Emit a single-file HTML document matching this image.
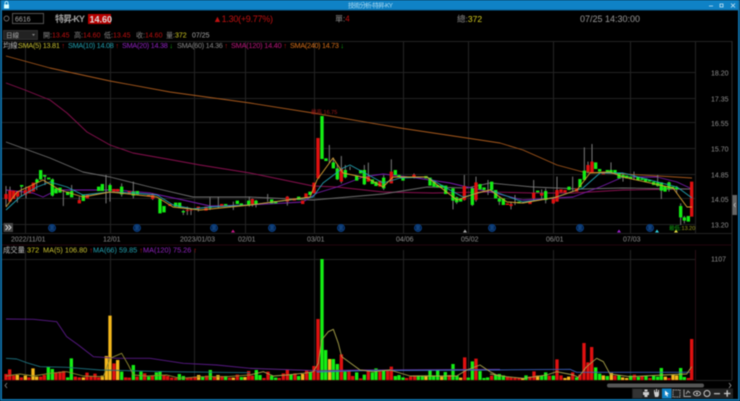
<!DOCTYPE html>
<html><head><meta charset="utf-8"><style>
html,body{margin:0;padding:0;background:#000;width:740px;height:401px;overflow:hidden}
svg{display:block;filter:blur(.42px)}
text{font-family:"Liberation Sans","Noto Sans CJK TC",sans-serif}
</style></head><body>
<svg width="740" height="401" viewBox="0 0 740 401" xmlns="http://www.w3.org/2000/svg">
<rect width="740" height="401" fill="#000"/>
<!-- window frame -->
<rect width="740" height="10" fill="#0f82c6"/><rect y="9.5" width="740" height="1" fill="#0a5f94"/>
<rect width="2" height="401" fill="#0e6fa8"/><rect x="738" width="2" height="401" fill="#0e6fa8"/><rect y="399" width="740" height="2" fill="#0e6fa8"/>
<path d="M4 4.5h5v4h-5z" fill="#dff"/><path d="M5 4.5v-1.5a1.5 1.5 0 0 1 3 0v1.5" fill="none" stroke="#dff" stroke-width=".8"/>
<text x="348" y="7.6" font-size="6.5" fill="#a8d8f0" textLength="45">技術分析-特昇-KY</text>
<path d="M709 6h4M720 4h3v3h-3zM731 3.5l4 4M735 3.5l-4 4" fill="none" stroke="#cfe8f5" stroke-width=".8"/>
<!-- header -->
<circle cx="6.5" cy="18.5" r="2.5" fill="none" stroke="#888" stroke-width=".7"/>
<rect x="12.5" y="13.5" width="31" height="10" fill="#000" stroke="#666" stroke-width=".8"/>
<text x="15" y="21.5" font-size="7" fill="#aaa">6616</text>
<text x="55" y="22" font-size="9" font-weight="bold" fill="#a0a0a0" textLength="30">特昇-KY</text>
<rect x="88" y="14" width="23" height="10" fill="#b80000"/>
<text x="89.5" y="22.3" font-size="9" font-weight="bold" fill="#ddd">14.60</text>
<text x="213" y="22" font-size="9" fill="#c01010" textLength="60">▲1.30(+9.77%)</text>
<text x="335" y="21.5" font-size="8" fill="#888">單:<tspan fill="#c01010">4</tspan></text>
<text x="457" y="22" font-size="8.5" fill="#888">總:<tspan fill="#d8d020">372</tspan></text>
<text x="580" y="22" font-size="9" fill="#999" textLength="60">07/25 14:30:00</text>
<rect x="3.5" y="30.5" width="34" height="9" fill="#222" stroke="#444" stroke-width=".6"/>
<text x="6" y="37.3" font-size="6.5" fill="#aaa">日線</text>
<path d="M32 34h3l-1.500 2z" fill="#888"/>
<g font-size="7">
<text x="43" y="37.300" fill="#888">開:<tspan fill="#c01010">13.45</tspan></text>
<text x="74" y="37.300" fill="#888">高:<tspan fill="#c01010">14.60</tspan></text>
<text x="104" y="37.300" fill="#888">低:<tspan fill="#c01010">13.45</tspan></text>
<text x="136" y="37.300" fill="#888">收:<tspan fill="#c01010">14.60</tspan></text>
<text x="166" y="37.300" fill="#888">量:<tspan fill="#d8d020">372</tspan></text>
<text x="192" y="37.300" fill="#aaa">07/25</text>
</g>
<!-- grid -->
<path d="M2 41.500H732M2 72.500H695M2 98.500H695M2 122.500H695M2 148.500H695M2 174.500H695M2 198.500H695M2 224.500H695M2 233.500H732M2 259.500H695M2 380.500H732" stroke="#222" stroke-width="1" fill="none"/>
<path d="M25.500 41V233M110.500 41V233M194.500 41V233M245.500 41V233M314.500 41V233M403.500 41V233M468.500 41V233M553.500 41V233M630.500 41V233M695.500 41V233M25.500 250V380M110.500 250V380M194.500 250V380M314.500 250V380M403.500 250V380M468.500 250V380M553.500 250V380M630.500 250V380" stroke="#242424" stroke-width="1" fill="none"/>
<path d="M695.500 250V380" stroke="#2a1016" stroke-width="1"/>
<path d="M732 41V380" stroke="#2c2c2c" stroke-width="1"/>
<path d="M2 245H732" stroke="#23060e" stroke-width="1"/>
<!-- legend -->
<g font-size="7.300">
<text x="3" y="48" fill="#bbb">均線:</text>
<text x="18" y="48" fill="#c8c030" textLength="47">SMA(5) 13.81 <tspan fill="#c01010">↑</tspan></text>
<text x="68" y="48" fill="#22a0b0" textLength="51">SMA(10) 14.08 <tspan fill="#c01010">↑</tspan></text>
<text x="122" y="48" fill="#9022c0" textLength="51">SMA(20) 14.38 <tspan fill="#10b010">↓</tspan></text>
<text x="177" y="48" fill="#888" textLength="51">SMA(60) 14.36 <tspan fill="#c01010">↑</tspan></text>
<text x="231" y="48" fill="#c0187f" textLength="56">SMA(120) 14.40 <tspan fill="#c01010">↑</tspan></text>
<text x="290" y="48" fill="#d87018" textLength="54">SMA(240) 14.73 <tspan fill="#10b010">↓</tspan></text>
<text x="3" y="252.500" fill="#bbb">成交量</text>
<text x="27" y="252.500" fill="#d8d020">372</text>
<text x="43" y="252.500" fill="#c8c030">MA(5) 106.80 <tspan fill="#c01010">↑</tspan></text>
<text x="93" y="252.500" fill="#22a0b0">MA(66) 59.85 <tspan fill="#c01010">↑</tspan></text>
<text x="143" y="252.500" fill="#9022c0">MA(120) 75.26 <tspan fill="#c01010">↑</tspan></text>
</g>
<!-- axis labels -->
<g font-size="7" fill="#909090">
<text x="711" y="75.500">18.20</text><text x="711" y="101.500">17.35</text><text x="711" y="126">16.55</text><text x="711" y="151.500">15.70</text><text x="711" y="177.500">14.85</text><text x="711" y="202">14.05</text><text x="711" y="227.500">13.20</text>
<text x="711" y="261.500">1107</text>
<text x="11" y="241.500">2022/11/01</text><text x="103" y="241.500">12/01</text><text x="180" y="241.500">2023/01/03</text><text x="238" y="241.500">02/01</text><text x="307" y="241.500">03/01</text><text x="396" y="241.500">04/06</text><text x="461" y="241.500">05/02</text><text x="546" y="241.500">06/01</text><text x="623" y="241.500">07/03</text>
</g>
<!-- MA lines -->
<g fill="none" stroke-width=".9" stroke-linejoin="round">
<polyline stroke="#a8591c" points="6,56 50,68 110,81 170,92 250,103 313,113 400,128 500,143 523,150 557,165 583,172 623,174 692,178"/>
<polyline stroke="#8a1050" points="6,83 25,90 50,100 67,113 87,132 110,145 133,153 167,159 200,165 250,173 313,186 337,187 383,192 433,193 490,192 533,193 573,193 623,190 690,189"/>
<polyline stroke="#6e6e6e" points="6,142 50,158 83,172 110,177 150,187 193,197 250,197 313,200 383,194 427,187 467,188 490,183 533,187 580,189 623,188 690,189"/>
<polyline stroke="#7a1cb0" points="6,190 33,193 43,197 57,190 83,190 117,190 150,193 183,200 210,206 250,205 303,202 317,193 337,187 363,177 383,174 417,178 450,183 467,187 490,192 523,200 573,197 600,187 623,177 657,177 677,182 692,189"/>
</g>
<!-- candles zoom-coord groups -->
<g transform="translate(0,50) scale(.33333)" fill="none">
<path stroke="#7a7a7a" stroke-width="3" d="M18 408V470M30 410V455M52 430V458M64 405V440M78 410V445M110 385V420M122 360V390M135 375V405M158 385V440M190 420V468M215 405V440M238 440V460M318 375V460M330 400V455M400 395V445M365 400V440M458 430V450M550 480V495M562 470V495M573 475V495M595 470V485M630 443V480M655 440V475M700 455V480M748 440V470"/>
<path stroke="#e01010" stroke-width="10" d="M18 432V447M30 422V455M41 422V447M53 425V440M76 420V435M88 410V430M100 398V425M238 450V460M262 433V445M342 417V425M353 417V425M388 423V432M446 435V440M458 433V447M510 462V468M562 480V483M573 480V482M595 470V476M618 470V482M665 462V468"/>
<path stroke="#14ee14" stroke-width="10" d="M65 405V410M111 388V398M122 360V388M134 375V380M146 383V388M157 388V437M168 415V430M180 413V428M203 425V435M215 423V442M250 433V453M296 410V423M307 402V423M330 405V423M365 410V433M400 425V437M412 423V433M480 447V490M492 468V487M527 458V470M539 458V473M550 483V487M585 475V478M630 470V474M677 462V466M712 452V462M724 460V466M746 452V467"/>
</g>
<g transform="translate(250,90) scale(.33333)" fill="none">
<path stroke="#7a7a7a" stroke-width="3" d="M7 325V350M18 330V352M53 312V335M112 318V347M238 165V220M250 203V235M262 222V270M274 198V280M286 225V265M300 230V240M355 218V262M343 225V285M424 208V280M401 255V300M609 295V358M620 320V342M643 255V332M667 290V348M678 260V335M714 270V315M492 250V265"/>
<path stroke="#e01010" stroke-width="10" d="M7 327V342M112 320V335M133 325V332M158 332V342M168 310V325M192 278V310M204 144V265M274 235V275M355 260V275M390 272V290M424 245V280M492 254V260M643 288V330M678 277V330"/>
<path stroke="#14ee14" stroke-width="10" d="M18 332V343M65 328V340M77 333V340M146 320V330M180 305V315M216 78V207M228 205V213M250 217V235M262 235V268M286 240V262M320 258V272M332 240V250M343 240V283M367 268V282M378 275V288M401 263V295M436 240V255M447 255V260M459 262V272M528 258V265M540 263V287M552 275V290M563 285V292M575 285V293M587 287V312M609 295V332M620 322V337M632 325V335M667 295V345M690 282V298M702 292V300"/>
</g>
<g transform="translate(490,130) scale(.33333)" fill="none">
<path stroke="#7a7a7a" stroke-width="3" d="M28 200V225M63 215V238M75 195V225M131 150V210M155 178V210M167 175V220M190 205V222M201 140V215M248 140V185M283 52V150M294 95V130M306 42V128M363 97V125M399 130V155M432 125V150M503 135V170M514 157V207M537 155V185M560 168V190M572 220V285M583 258V280"/>
<path stroke="#e01010" stroke-width="10" d="M52 220V225M63 222V228M120 215V222M131 188V205M155 190V197M190 207V220M201 180V215M213 178V187M225 180V188M260 175V185M294 105V125M306 95V128M340 125V133M605 155V260"/>
<path stroke="#14ee14" stroke-width="10" d="M5 155V180M17 180V205M28 205V215M40 205V225M87 215V220M143 182V187M167 183V210M237 170V180M270 147V172M283 122V150M317 97V117M329 117V125M352 120V125M363 120V130M375 120V128M387 130V145M399 135V143M410 137V145M422 140V147M444 140V150M456 145V150M467 145V155M479 150V155M491 155V165M503 157V168M514 157V182M525 168V185M537 157V178M548 170V176M560 172V178M572 228V262M583 262V272M595 258V275"/>
</g>
<!-- short MAs on top -->
<g fill="none" stroke-width=".9" stroke-linejoin="round">
<polyline stroke="#22a0b0" points="6,210 20,197 37,187 50,182 67,187 83,195 110,192 133,193 157,195 173,205 193,209 210,207 250,205 313,197 323,183 343,168 350,165 363,172 383,183 400,178 427,177 450,190 463,197 490,190 523,202 553,198 583,188 600,173 623,173 677,187 692,198"/>
<polyline stroke="#d8a030" points="6,207 17,192 43,180 60,190 83,197 110,192 157,197 173,207 200,210 250,205 310,197 317,180 333,158 343,173 367,178 383,187 393,177 427,177 457,200 477,193 490,190 507,202 523,203 557,197 577,190 590,173 610,172 623,177 673,188 687,207 692,207"/>
</g>
<!-- markers -->
<g fill="#03204a" stroke="#0a4288" stroke-width=".9">
<circle cx="52" cy="228" r="3.500"/><circle cx="137" cy="228" r="3.500"/><circle cx="214" cy="228" r="3.500"/><circle cx="272" cy="228" r="3.500"/><circle cx="341" cy="228" r="3.500"/><circle cx="418" cy="228" r="3.500"/><circle cx="492" cy="228" r="3.500"/><circle cx="580" cy="228" r="3.500"/><circle cx="650" cy="228" r="3.500"/>
</g>
<g font-size="4.500" fill="#2a78c8" text-anchor="middle">
<text x="52" y="229.700">息</text><text x="137" y="229.700">息</text><text x="214" y="229.700">息</text><text x="272" y="229.700">息</text><text x="341" y="229.700">息</text><text x="418" y="229.700">息</text><text x="492" y="229.700">息</text><text x="580" y="229.700">息</text><text x="650" y="229.700">息</text>
</g>
<path d="M233 229.500l2 3h-4z" fill="#c8188a"/><path d="M465 229.500l2 3h-4z" fill="#aaa"/><path d="M619 229.500l2 3h-4z" fill="#a020d0"/><path d="M657 229.500l2 3h-4z" fill="#30d0e0"/><path d="M676 229.500l2 3h-4z" fill="#e8e040"/>
<text x="311" y="114" font-size="5.500" fill="#a01818">最高 16.75</text>
<text x="669" y="230" font-size="5.500" fill="#10a010">最低:<tspan fill="#a0a020">13.20</tspan></text>
<rect x="3.500" y="223" width="9.500" height="9" fill="#444"/><path d="M5.500 225l2.500 2.500-2.500 2.500M8.500 225l2.500 2.500-2.500 2.500" fill="none" stroke="#ddd" stroke-width=".9"/>
<rect x="732.500" y="195" width="4.500" height="20" fill="#666"/><path d="M735.500 203l-1.500 2 1.500 2" fill="none" stroke="#ddd" stroke-width=".6"/>
<!-- volume bars -->
<g transform="translate(0,250) scale(.33333)" fill="none" stroke-width="10">
<path stroke="#e01010" d="M18 390V372M29 390V358M41 390V377M64 390V382M87 390V382M122 390V380M133 390V375M168 390V367M180 390V365M191 390V363M226 390V380M238 390V382M261 390V368M273 390V378M285 390V371M296 390V382M342 390V340M377 390V382M388 390V383M411 390V380M434 390V370M457 390V377M492 390V375M503 390V378M515 390V383M527 390V384M562 390V383M573 390V383M585 390V380M620 390V377M643 390V380M666 390V378M689 390V383M712 390V374M746 390V363"/>
<path stroke="#14ee14" d="M145 390V350M157 390V357M203 390V382M214 390V325M365 390V365M400 390V345M423 390V365M446 390V380M469 390V367M480 390V363M538 390V372M550 390V378M608 390V381M631 390V360M677 390V378M724 390V381"/>
<path stroke="#f5b81c" d="M52 390V375M76 390V377M99 390V355M110 390V380M250 390V382M307 390V377M319 390V318M330 390V197M353 390V330M596 390V375M654 390V375M700 390V383M735 390V381"/>
</g>
<g transform="translate(250,250) scale(.33333)" fill="none" stroke-width="10">
<path stroke="#e01010" d="M7 390V377M42 390V384M54 390V365M88 390V384M100 390V370M112 390V360M135 390V370M170 390V360M192 390V348M204 390V207M274 390V313M297 390V360M308 390V378M332 390V385M355 390V360M390 390V365M413 390V363M424 390V350M470 390V384M482 390V380M494 390V376M598 390V375M644 390V322M678 390V326"/>
<path stroke="#14ee14" d="M19 390V360M30 390V375M65 390V377M77 390V383M123 390V373M146 390V378M181 390V367M216 390V27M227 390V300M250 390V327M262 390V342M285 390V365M320 390V367M343 390V374M367 390V367M378 390V355M401 390V363M436 390V378M447 390V375M459 390V382M505 390V376M517 390V376M540 390V360M551 390V376M563 390V360M586 390V366M609 390V342M621 390V377M655 390V383M667 390V334M690 390V363M702 390V384M713 390V382"/>
<path stroke="#f5b81c" d="M158 390V372M239 390V327M528 390V376M575 390V380M632 390V383"/>
</g>
<g transform="translate(490,250) scale(.33333)" fill="none" stroke-width="10">
<path stroke="#e01010" d="M5 390V377M52 390V380M63 390V383M75 390V384M87 390V384M120 390V380M132 390V364M178 390V377M201 390V328M213 390V376M248 390V367M270 390V374M282 390V279M294 390V337M305 390V291M375 390V377M433 390V374M456 390V378M480 390V384M537 390V384M595 390V384M605 390V267"/>
<path stroke="#14ee14" d="M17 390V374M28 390V372M40 390V376M108 390V376M155 390V378M167 390V367M190 390V377M260 390V382M317 390V352M329 390V371M352 390V378M387 390V375M422 390V377M445 390V381M468 390V378M491 390V378M503 390V380M514 390V354M572 390V354M583 390V381"/>
<path stroke="#f5b81c" d="M98 390V384M143 390V377M225 390V384M236 390V380M340 390V376M364 390V369M398 390V382M410 390V384M526 390V380M549 390V375M560 390V376"/>
</g>
<rect x="2" y="380" width="694" height="1" fill="#2a0808"/>
<!-- volume MA lines -->
<g transform="translate(0,250) scale(.33333)" fill="none" stroke-width="2.700" stroke-linejoin="round">
<polyline stroke="#5a1a88" points="18,207 100,208 170,215 200,260 235,285 280,320 350,325 450,325 550,340 650,345 750,355"/>
<polyline stroke="#1c6f7c" points="18,325 50,327 80,338 120,350 200,352 300,360 500,365 750,368"/>
<polyline stroke="#8f8a30" points="18,378 60,372 100,378 150,370 200,365 250,378 310,380 330,325 365,310 385,345 400,375 440,378 500,375 540,385 600,380 680,380 750,375"/>
</g>
<g transform="translate(250,250) scale(.33333)" fill="none" stroke-width="2.700" stroke-linejoin="round">
<polyline stroke="#6a2a98" points="0,355 200,362 340,360 750,358"/>
<polyline stroke="#3a6ec0" points="200,366 340,362 750,360"/>
<polyline stroke="#a9a24a" points="0,375 40,365 70,378 110,375 160,370 190,365 205,340 215,270 235,245 250,238 265,280 275,320 330,360 370,365 420,360 480,378 540,378 620,378 650,360 690,345 720,365 750,380"/>
</g>
<g transform="translate(490,250) scale(.33333)" fill="none" stroke-width="2.700" stroke-linejoin="round">
<polyline stroke="#3a5eb8" points="0,360 240,358 260,367 600,367"/>
<polyline stroke="#a9a24a" points="0,372 50,380 100,385 170,375 200,365 250,375 265,382 290,350 320,325 340,335 360,372 420,380 520,375 590,372 605,350"/>
</g>
<!-- bottom controls -->
<path d="M7 383l-2 2.500 2 2.500" fill="none" stroke="#888" stroke-width=".8"/>
<rect x="607" y="383.500" width="97" height="4" rx="2" fill="#555"/>
<path d="M729 383l2 2.500-2 2.500" fill="none" stroke="#999" stroke-width=".8"/>
<rect x="632" y="388.500" width="101" height="10" fill="#222"/>
<rect x="633" y="389" width="9" height="9" fill="#333"/>
<path d="M643 392h6v3h-6zM644.500 389.500h3v2h-3zM644.500 395h3v2h-3z" fill="#ccc"/>
<path d="M654 393v-3h1v2h1v-3h1v3h1v-2h1v5l-1 2h-3z" fill="#ccc"/>
<rect x="662" y="388.500" width="9.500" height="10" fill="#0f82c6"/><path d="M665 390.500l4 3.500-2 .2 1 2-1 .4-1-2-1 1.300z" fill="#fff"/>
<rect x="673" y="390" width="7" height="7" fill="none" stroke="#999" stroke-width="1" stroke-dasharray="1.500 .8"/>
<path d="M684 389.500v7h7M686 394l2-3 2 2" fill="none" stroke="#aaa" stroke-width=".9"/>
<ellipse cx="697" cy="393.500" rx="3.500" ry="2.300" fill="none" stroke="#ccc" stroke-width=".9"/><circle cx="697" cy="393.500" r="1" fill="#ccc"/>
<circle cx="707" cy="393.500" r="3" fill="none" stroke="#ccc" stroke-width="1"/>
<rect x="714" y="393" width="6" height="1.300" fill="#bbb"/>
<path d="M724 393.500h6.500M727.200 390.300v6.500" stroke="#ccc" stroke-width="1.300" fill="none"/>
</svg>
</body></html>
